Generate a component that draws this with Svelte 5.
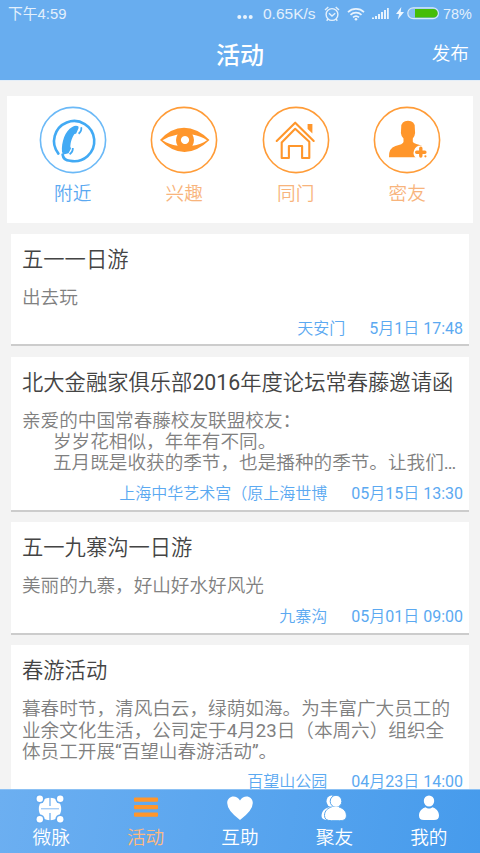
<script>
  const cards = [
    { title: '五一一日游', body: ['出去玩'], place: '天安门', time: '5月1日 17:48' },
    {
      title: '北大金融家俱乐部2016年度论坛常春藤邀请函',
      body: ['亲爱的中国常春藤校友联盟校友：', '岁岁花相似，年年有不同。', '五月既是收获的季节，也是播种的季节。让我们…'],
      indent: true, place: '上海中华艺术宫（原上海世博', time: '05月15日 13:30'
    },
    { title: '五一九寨沟一日游', body: ['美丽的九寨，好山好水好风光'], place: '九寨沟', time: '05月01日 09:00' },
    {
      title: '春游活动',
      body: ['暮春时节，清风白云，绿荫如海。为丰富广大员工的', '业余文化生活，公司定于4月23日（本周六）组织全', '体员工开展“百望山春游活动”。'],
      place: '百望山公园', time: '04月23日 14:00'
    }
  ];
  const categories = ['附近', '兴趣', '同门', '密友'];
  const tabs = ['微脉', '活动', '互助', '聚友', '我的'];
</script>

<div class="app">
  <header>
    <div class="status">
      <span class="clock">下午4:59</span>
      <svg class="dots" width="16" height="16"><g fill="#e8f3fd"><circle cx="2.3" cy="9" r="2"/><circle cx="8" cy="9" r="2"/><circle cx="13.7" cy="9" r="2"/></g></svg>
      <span class="speed">0.65K/s</span>
      <svg class="alarm" width="16" height="16" fill="none" stroke="#e3f0fc" stroke-width="1.4"><circle cx="8" cy="8.5" r="5.9"/><path d="M1 4 4.3 1M11.7 1 15 4M5 7.2l3 2.8 3.2-2.8M4 13l-1.3 1.7M12 13l1.3 1.7"/></svg>
      <svg class="wifi" width="18" height="14" fill="none" stroke="#e8f3fd" stroke-width="1.7"><path d="M1 5.2a11.5 11.5 0 0 1 16 0M3.5 7.9a8 8 0 0 1 11 0M6 10.4a4.6 4.6 0 0 1 6 0"/><circle cx="9" cy="12.3" r="1.3" fill="#e8f3fd" stroke="none"/></svg>
      <svg class="signal" width="17" height="13" fill="#e8f3fd"><path d="M0 10.5h2V12H0zM3 9h2v3H3zM6 7h2v5H6zM9 5h2v7H9zM12 3h2v9h-2zM15 1h1.8v11H15z"/></svg>
      <svg class="bolt" width="8" height="13" fill="#eef7ff"><path d="M5.3 0 0 7h3L1.9 12.5 8 5H4.7z"/></svg>
      <svg class="battery" width="33" height="13"><rect x=".8" y=".8" width="30.6" height="10.9" rx="5.45" fill="#85bdf2" stroke="#d9eaf9" stroke-width="1.2"/><path d="M8 2h18.5a4.2 4.2 0 0 1 0 8.5H8z" fill="#45bd08"/></svg>
      <span class="percent">78%</span>
    </div>
    <div class="bar"><span></span><h1>活动</h1><span class="publish">发布</span></div>
  </header>

  <section class="categories">
    {#each categories as label, i}
      <div class="category" class:selected={i === 0}>
        <svg width="68" height="68" viewBox="0 0 68 68" fill="none">
          <circle cx="34" cy="34" r="32.6" stroke={i === 0 ? '#6bb9f7' : '#ff9c38'} stroke-width="1.6" />
          {#if i === 0}
            <path d="M19.4 47.6A20.1 20.1 0 1 1 31 54.8Q24.3 54.5 23.6 48.5" stroke="#42aaf4" stroke-width="2.6" stroke-linecap="round"/>
            <path d="M33.2 21Q36.5 18.8 39.3 20.2L39.6 22 37.2 27.4 35.2 28.3Q31.4 34.5 31.3 40.5L32 42.5 29.5 47.3 24.6 48.6 23 46C22.2 36.5 26 24.8 33.2 21Z" fill="#42aaf4"/>
            <path d="M42.2 21.2q.8 3.6-2.6 6.5M33.8 42q.3 3.8-3.2 6.2" stroke="#42aaf4" stroke-width="1.8"/>
          {:else if i === 1}
            <path fill="#ff962b" fill-rule="evenodd" d="M10 34Q21 21.8 34 21.8T59.5 34Q47 46 34.5 46T10 34ZM12.5 34.2Q19 38.5 27.6 39.8Q24.4 34 27.6 28.4Q19 30 12.5 34.2ZM42.4 28.4Q45.6 34 42.4 39.8Q51 38.5 57 34.2Q51 30 42.4 28.4ZM35 29.9a4.1 4.1 0 1 0 .01 0Z"/>
          {:else if i === 2}
            <path d="M14.7 35 33.2 16.7 51.7 35M19.7 36.4V52h7.2V40h13.2v12h7.2V35.8L33.2 22.8Z" stroke="#ff962b" stroke-width="2.1" stroke-linejoin="round" stroke-linecap="round"/>
            <path d="M45.6 18h4.8v9.4l-4.8-4.4z" fill="#ff962b"/>
          {:else}
            <path d="M28.2 21.5q0-6.7 6.8-6.7t6.8 6.7l.3 5.5q-.3 3.5-2.3 5.5v3.3q1 1.8 7 3.2 8 2 7.5 12.3H16q-.5-9.3 6.5-11.3Q30 38.3 30.5 36v-3.5q-2.3-2-2.6-5.5Z" fill="#ff962b"/>
            <path d="M47.8 39.6a7.2 7.2 0 0 0-4.6 12.7H57V41Z" fill="#fff"/>
            <path d="M47.8 42.3v7.8M43.7 46.2h8.2" stroke="#ff962b" stroke-width="3.4" stroke-linecap="round"/><circle cx="52.4" cy="50.3" r="1.1" fill="#ff962b"/>
          {/if}
        </svg>
        <span>{label}</span>
      </div>
    {/each}
  </section>

  <main>
    {#each cards as card}
      <article>
        <h2>{card.title}</h2>
        <div class="body" class:indent={card.indent}>
          {#each card.body as line}<p>{line}</p>{/each}
        </div>
        <footer><span>{card.place}</span><time>{card.time}</time></footer>
      </article>
    {/each}
  </main>

  <nav>
    {#each tabs as label, i}
      <div class="tab" class:current={i === 1}>
        <svg width="30" height="30" viewBox="0 0 30 30" fill="#fff">
          {#if i === 0}
            <circle cx="15" cy="15" r="11.2"/>
            <path d="M15 3v9M15 19v8" stroke="#64aaf0" stroke-width="1.2"/>
            <path d="M6 14.8h18" stroke="#64aaf0" stroke-width=".8"/>
            <circle cx="4.8" cy="4.8" r="4.8" fill="#64aaf0"/><circle cx="25.2" cy="4.8" r="4.8" fill="#64aaf0"/><circle cx="4.8" cy="25.2" r="4.8" fill="#64aaf0"/><circle cx="25.2" cy="25.2" r="4.8" fill="#64aaf0"/>
            <circle cx="4.8" cy="4.8" r="3.2"/><circle cx="25.2" cy="4.8" r="3.2"/><circle cx="4.8" cy="25.2" r="3.2"/><circle cx="25.2" cy="25.2" r="3.2"/>
          {:else if i === 1}
            <path fill="#ff962b" d="M4 3.5h22q1 0 1 1v2.3q0 1-1 1H4q-1 0-1-1V4.5q0-1 1-1ZM4 11h22q1 0 1 1v2.3q0 1-1 1H4q-1 0-1-1V12q0-1 1-1ZM4 18.5h22q1 0 1 1v2.3q0 1-1 1H4q-1 0-1-1v-2.3q0-1 1-1Z"/>
          {:else if i === 2}
            <path d="M15 26Q2.2 16.5 2.2 9C2.2 1.500 11.5 0 15 6.5 18.5 0 27.8 1.500 27.8 9Q27.8 16.5 15 26Z"/>
          {:else if i === 3}
            <ellipse cx="12.500" cy="7.300" rx="5" ry="5.700"/><path d="M2.500 22c0-5 4-8.500 9-9h6v13H9q-6.500 0-6.500-4Z"/>
            <g stroke="#55a5ed" stroke-width="1"><path d="M5.500 21.500c0-5 3.600-7.500 7-8.500h7.200c4.500 1.200 7.700 4 7.700 8.500 0 3.700-2 5.200-7 5.200h-8q-6.900 0-6.900-5.200Z"/><ellipse cx="17" cy="7.300" rx="5.800" ry="6"/></g><path d="M12.500 12.700h8l-1 2h-6z"/>
          {:else}
            <ellipse cx="15" cy="7" rx="5.200" ry="5.500"/><path d="M5 21.500c0-4.500 3.300-7.300 6.500-8.300 2 1.800 5 1.800 7 0 3.200 1 6.500 3.800 6.500 8.300 0 3-1.500 4.500-5 4.500H10c-3.500 0-5-1.500-5-4.500Z"/>
          {/if}
        </svg>
        <span>{label}</span>
      </div>
    {/each}
  </nav>
</div>

<style>
  :global(body) { margin: 0; overflow: hidden; }
  .app { width: 480px; height: 853px; display: flex; flex-direction: column; overflow: hidden; background: #f3f3f3; font-family: Roboto, 'Noto Sans CJK SC DemiLight', 'Noto Sans CJK SC', sans-serif; }
  h1, h2, p { margin: 0; font-weight: 400; }
  header { height: 81px; flex: none; background: #68adef; color: #fff; border-bottom: 1px solid #e4eef8; box-sizing: border-box; }
  .status { height: 28px; display: flex; align-items: center; padding: 0 8px; box-sizing: border-box; font: 15.5px/28px 'Liberation Sans', 'Noto Sans CJK SC', sans-serif; color: #e3f0fc; white-space: nowrap; }
  .status svg { flex: none; position: relative; top: -0.5px; }
  .clock { width: 229px; font-size: 14.8px; }
  .status .dots { margin-top: 5px; }
  .speed { width: 54px; margin-left: 10px; }
  .alarm { margin-left: 7px; }
  .wifi { margin-left: 7px; }
  .signal { margin-left: 7px; }
  .bolt { margin-left: 7px; }
  .battery { margin-left: 3px; }
  .percent { margin-left: 3px; font-size: 14.4px; }
  .bar { height: 52px; display: grid; grid-template-columns: 1fr auto 1fr; align-items: center; padding: 0 11px; }
  h1 { font-family: 'Noto Sans CJK SC', sans-serif; font-size: 24px; line-height: 50px; font-weight: 500; }
  .publish { text-align: right; font-size: 18.67px; line-height: 26px; margin-top: -1px; }
  .categories { flex: none; height: 127px; box-sizing: border-box; margin: 15px 7px 0; padding: 10px 10px 0; background: #fff; display: flex; }
  .category { flex: 1; display: flex; flex-direction: column; align-items: center; color: #f8b47c; font-size: 18.67px; line-height: 28px; }
  .category span { margin-top: 6px; font-weight: 350; }
  .category.selected { color: #5ba9f1; }
  main { flex: 1; min-height: 0; overflow: hidden; padding: 11px 11px 0; display: flex; flex-direction: column; gap: 10.4px; }
  article { flex: none; background: #fff; border-bottom: 2px solid #ccc; padding: 10px 6px 5.9px 11px; }
  h2 { font-size: 21.3px; line-height: 32px; color: #444; white-space: nowrap; }
  .body { margin-top: 12px; font-size: 18.62px; line-height: 21.3px; color: #808080; white-space: nowrap; }
  .indent p:not(:first-child) { padding-left: 31px; }
  footer { margin-top: 9.3px; display: flex; justify-content: flex-end; gap: 24px; font-size: 16px; line-height: 20px; color: #5ba9f1; }
  nav { height: 64px; flex: none; display: flex; padding: 0 4px; background: linear-gradient(100deg, #6caff1, #469bec); border-top: 1px solid #8cc1f4; box-sizing: border-box; color: #fff; }
  .tab { flex: 1; display: flex; flex-direction: column; align-items: center; font-size: 18.67px; line-height: 26px; padding-top: 4px; box-sizing: border-box; }
  .tab svg { flex: none; margin-bottom: 1px; }
  .tab:first-child svg { margin-right: 2px; }
  .tab.current { color: #fdb981; }
</style>
